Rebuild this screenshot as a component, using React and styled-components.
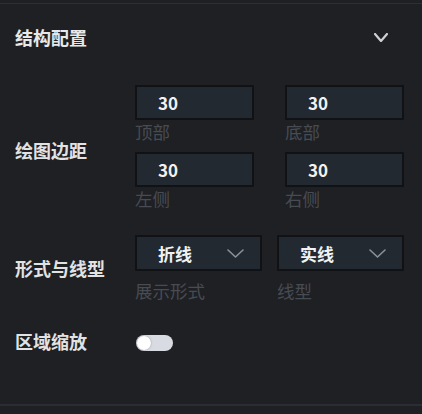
import React from "react";
import styled, { createGlobalStyle } from "styled-components";

const Global = createGlobalStyle`
  html, body { margin: 0; padding: 0; background: #1e2024; }
  * { box-sizing: border-box; }
  body { font-family: "Noto Sans CJK SC", "Noto Sans", sans-serif; }
`;

const Panel = styled.div`
  width: 422px;
  height: 414px;
  background: #1e2024;
  padding-top: 3px;
  display: flex;
  flex-direction: column;
`;

const Section = styled.div`
  border-top: 1px solid #2c2f35;
  border-bottom: 2px solid #2a2d33;
  height: 403px;
  display: flex;
  flex-direction: column;
  padding: 0 18px 0 15px;
`;

const Header = styled.div`
  height: 66px;
  display: flex;
  align-items: center;
  justify-content: space-between;
  padding-right: 16px;
  color: #e8e8e8;
  font-size: 18px;
  font-weight: 700;
  margin-bottom: 15px;
`;

const Row = styled.div`
  display: grid;
  grid-template-columns: 120px 1fr;
  align-items: center;
  margin-bottom: ${(p) => p.$mb || 0}px;
`;

const RowLabel = styled.div`
  color: #e2e2e2;
  font-size: 18px;
  font-weight: 700;
  line-height: 24px;
  white-space: nowrap;
  margin-top: ${(p) => p.$mt || 0}px;
`;

const Fields = styled.div`
  display: grid;
  grid-template-columns: 1fr 1fr;
  column-gap: ${(p) => p.$gap}px;
`;

const Field = styled.div`
  display: flex;
  flex-direction: column;
`;

const Input = styled.div`
  height: ${(p) => p.$h}px;
  background: #232931;
  border: 2px solid #101215;
  display: flex;
  align-items: center;
  justify-content: space-between;
  padding: 0 16px 0 21px;
  color: #f2f2f2;
  font-size: 17px;
  font-weight: 700;
`;

const Sub = styled.div`
  color: #474b52;
  font-size: 17.5px;
  line-height: 24px;
  margin-top: ${(p) => p.$mt}px;
  margin-bottom: ${(p) => p.$mb}px;
`;

const Toggle = styled.div`
  width: 37px;
  height: 16px;
  border-radius: 8px;
  background: #d9dbe3;
  position: relative;
  margin-left: 1px;
`;

const Knob = styled.div`
  position: absolute;
  left: 1px;
  top: 1px;
  width: 14px;
  height: 14px;
  border-radius: 50%;
  background: #ffffff;
  box-shadow: 0 0 2px rgba(0, 0, 0, 0.35);
`;

const Chevron = ({ w, h, color, sw }) => (
  <svg width={w} height={h} viewBox={`0 0 ${w} ${h}`} fill="none">
    <path
      d={`M1 1 L${w / 2} ${h - 1} L${w - 1} 1`}
      stroke={color}
      strokeWidth={sw}
      strokeLinecap="round"
      strokeLinejoin="round"
    />
  </svg>
);

export default function App() {
  const margins = [
    ["30", "顶部"],
    ["30", "底部"],
    ["30", "左侧"],
    ["30", "右侧"],
  ];
  return (
    <>
      <Global />
      <Panel>
        <Section>
          <Header>
            <span>结构配置</span>
            <Chevron w={14} h={9} color="#d0d0d0" sw={2.2} />
          </Header>
          <Row $mb={16}>
            <RowLabel $mt={-4}>绘图边距</RowLabel>
            <Fields $gap={31}>
              {margins.map(([v, l], i) => (
                <Field key={i}>
                  <Input $h={35}>{v}</Input>
                  <Sub $mt={0} $mb={8}>{l}</Sub>
                </Field>
              ))}
            </Fields>
          </Row>
          <Row $mb={29}>
            <RowLabel $mt={-2}>形式与线型</RowLabel>
            <Fields $gap={15}>
              <Field>
                <Input $h={36}>
                  <span>折线</span>
                  <Chevron w={17} h={9} color="#8c9199" sw={1.6} />
                </Input>
                <Sub $mt={8} $mb={0}>展示形式</Sub>
              </Field>
              <Field>
                <Input $h={36}>
                  <span>实线</span>
                  <Chevron w={17} h={9} color="#8c9199" sw={1.6} />
                </Input>
                <Sub $mt={8} $mb={0}>线型</Sub>
              </Field>
            </Fields>
          </Row>
          <Row>
            <RowLabel $mt={-3}>区域缩放</RowLabel>
            <Toggle>
              <Knob />
            </Toggle>
          </Row>
        </Section>
      </Panel>
    </>
  );
}
